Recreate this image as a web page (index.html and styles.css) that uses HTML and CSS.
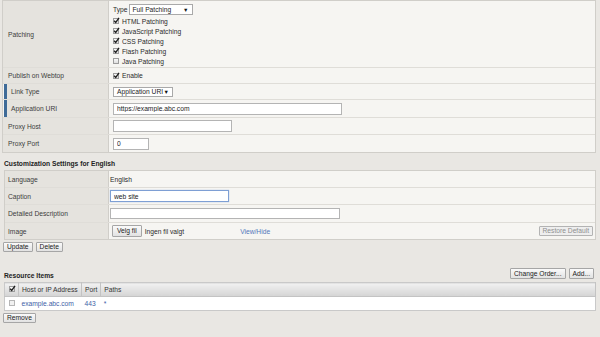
FILE: index.html
```html
<!DOCTYPE html>
<html lang="en">
<head>
    <meta charset="UTF-8">
    <meta name="viewport" content="width=device-width, initial-scale=1.0">
    <title>Webtop Link Properties</title>
    <link rel="stylesheet" href="styles.css">
</head>
<body>
    <div class="panel main">
        <div class="row patching">
            <div class="label">Patching</div>
            <div class="value stack">
                <div class="type-line">
                    <span>Type</span>
                    <span class="select wide"><span>Full Patching</span><span class="arrow">&#9660;</span></span>
                </div>
                <label class="check"><span class="cb on"><svg viewBox="0 0 8 8"><path d="M1.3 4.3 L3.1 6.2 L6.9 1"/></svg></span>HTML Patching</label>
                <label class="check"><span class="cb on"><svg viewBox="0 0 8 8"><path d="M1.3 4.3 L3.1 6.2 L6.9 1"/></svg></span>JavaScript Patching</label>
                <label class="check"><span class="cb on"><svg viewBox="0 0 8 8"><path d="M1.3 4.3 L3.1 6.2 L6.9 1"/></svg></span>CSS Patching</label>
                <label class="check"><span class="cb on"><svg viewBox="0 0 8 8"><path d="M1.3 4.3 L3.1 6.2 L6.9 1"/></svg></span>Flash Patching</label>
                <label class="check"><span class="cb"></span>Java Patching</label>
            </div>
        </div>
        <div class="row h16">
            <div class="label">Publish on Webtop</div>
            <div class="value">
                <label class="check"><span class="cb on"><svg viewBox="0 0 8 8"><path d="M1.3 4.3 L3.1 6.2 L6.9 1"/></svg></span>Enable</label>
            </div>
        </div>
        <div class="row h16">
            <div class="label sub">Link Type</div>
            <div class="value">
                <span class="select"><span>Application URI</span><span class="arrow">&#9660;</span></span>
            </div>
        </div>
        <div class="row h18">
            <div class="label sub">Application URI</div>
            <div class="value"><input class="field uri" type="text" value="https://example.abc.com"></div>
        </div>
        <div class="row h17">
            <div class="label">Proxy Host</div>
            <div class="value"><input class="field host" type="text" value=""></div>
        </div>
        <div class="row h17">
            <div class="label">Proxy Port</div>
            <div class="value"><input class="field port" type="text" value="0"></div>
        </div>
    </div>

    <h2 class="section-title">Customization Settings for English</h2>
    <div class="panel lang">
        <div class="row h17">
            <div class="label">Language</div>
            <div class="value">English</div>
        </div>
        <div class="row h17">
            <div class="label">Caption</div>
            <div class="value"><input class="field caption" type="text" value="web site"></div>
        </div>
        <div class="row h18">
            <div class="label">Detailed Description</div>
            <div class="value"><input class="field desc" type="text" value=""></div>
        </div>
        <div class="row h16">
            <div class="label">Image</div>
            <div class="value image">
                <button class="btn file">Velg fil</button>
                <span class="no-file">Ingen fil valgt</span>
                <a class="link view" href="#">View/Hide</a>
                <button class="btn restore" disabled>Restore Default</button>
            </div>
        </div>
    </div>
    <div class="actions">
        <button class="btn">Update</button>
        <button class="btn">Delete</button>
    </div>

    <div class="res-head">
        <h2 class="section-title">Resource Items</h2>
        <div class="res-buttons">
            <button class="btn">Change Order...</button>
            <button class="btn">Add...</button>
        </div>
    </div>
    <table class="resources">
        <thead>
            <tr>
                <th class="c-cb"><span class="cb on"><svg viewBox="0 0 8 8"><path d="M1.3 4.3 L3.1 6.2 L6.9 1"/></svg></span></th>
                <th class="c-host">Host or IP Address</th>
                <th class="c-port">Port</th>
                <th>Paths</th>
            </tr>
        </thead>
        <tbody>
            <tr>
                <td class="c-cb"><span class="cb"></span></td>
                <td><a class="link" href="#">example.abc.com</a></td>
                <td><a class="link" href="#">443</a></td>
                <td><a class="link" href="#">*</a></td>
            </tr>
        </tbody>
    </table>
    <div class="actions">
        <button class="btn">Remove</button>
    </div>
</body>
</html>
```

FILE: styles.css
```css
* {
    box-sizing: border-box;
}
body {
    margin: 0;
    width: 600px;
    height: 337px;
    overflow: hidden;
    background: #e9e7e3;
    font-family: "Liberation Sans", Arial, sans-serif;
    font-size: 6.7px;
    color: #3c3c3c;
}
.panel {
    margin: 0 4px 0 2px;
    border: 1px solid #d0cec9;
    background: #f6f5f2;
}
.panel.lang {
    margin-left: 4px;
}
.row {
    display: grid;
    grid-template-columns: 106px 1fr;
    border-bottom: 1px solid #dfddd8;
}
.panel.lang .row {
    grid-template-columns: 104px 1fr;
}
.row:last-child {
    border-bottom: none;
}
.h16 { height: 16px; }
.h17 { height: 17px; }
.h18 { height: 18px; }
.patching { height: 67px; }
.label {
    display: flex;
    align-items: center;
    padding-left: 5px;
    background: #e5e3de;
    border-right: 1px solid #d0cec9;
}
.panel.lang .label {
    padding-left: 3px;
}
.label.sub {
    border-left: 3px solid #3f6b98;
    margin-left: 1px;
    padding-left: 4px;
}
.value {
    display: flex;
    align-items: center;
    padding-left: 4px;
    color: #2a2a2a;
}
.panel.lang .value {
    padding-left: 1px;
}
.value.stack {
    flex-direction: column;
    align-items: flex-start;
    padding-top: 3px;
}
.type-line {
    display: flex;
    align-items: center;
    gap: 1px;
    margin-bottom: 1px;
}
.select {
    display: inline-flex;
    align-items: center;
    justify-content: space-between;
    width: 60px;
    height: 10px;
    padding: 0 3px 0 3px;
    background: #fff;
    border: 1px solid #a9a9a9;
    color: #222;
}
.select.wide {
    width: 64px;
    height: 11px;
}
.arrow {
    font-size: 5.5px;
    color: #111;
}
.check {
    display: flex;
    align-items: center;
    gap: 3px;
    height: 10px;
}
.cb {
    position: relative;
    display: inline-block;
    width: 6px;
    height: 6px;
    background: linear-gradient(#f8f8f8, #dedede);
    border: 1px solid #9c9c9c;
}
.cb svg {
    position: absolute;
    left: -1px;
    top: -2px;
    width: 7px;
    height: 7px;
    overflow: visible;
}
.cb path {
    fill: none;
    stroke: #1d1d1d;
    stroke-width: 1.5;
}
.field {
    height: 12px;
    padding: 0 3px;
    font-family: inherit;
    font-size: 6.7px;
    color: #222;
    background: #fff;
    border: 1px solid #b4b4b4;
    outline: none;
}
.uri { width: 229px; }
.host { width: 119px; }
.port { width: 36px; }
.caption {
    width: 119px;
    border-color: #7e9fd4;
    box-shadow: 0 0 1px #9db6e0;
}
.desc {
    width: 230px;
    height: 11px;
}
.section-title {
    margin: 0;
    padding: 6px 0 0 4px;
    height: 17px;
    line-height: 10px;
    font-size: 6.7px;
    font-weight: bold;
    color: #222;
}
.btn {
    height: 10px;
    padding: 0 3px;
    font-family: inherit;
    font-size: 6.7px;
    line-height: 8px;
    color: #222;
    background: linear-gradient(#fafafa, #e2e2e2);
    border: 1px solid #a6a6a6;
    border-radius: 1px;
}
.image {
    padding-right: 2px;
}
.btn.file {
    height: 12px;
    margin-left: 2px;
    padding: 0 4px;
}
.no-file {
    margin-left: 3px;
}
.link {
    color: #3e5ea6;
    text-decoration: none;
}
.view {
    margin-left: 56px;
    color: #5478bb;
}
.btn.restore {
    margin-left: auto;
    color: #8e8e8e;
    background: #eeeeee;
    border-color: #b3b3b3;
}
.actions {
    display: flex;
    gap: 3px;
    margin: 2px 0 0 3px;
}
.res-head {
    display: flex;
    align-items: flex-end;
    justify-content: space-between;
    height: 13px;
    margin: 15px 6px 0 0;
}
.res-head .section-title {
    padding-top: 0;
    height: 10px;
    margin-bottom: -1px;
}
.res-buttons {
    display: flex;
    gap: 3px;
    margin-bottom: 1px;
}
.res-buttons .btn {
    height: 11px;
}
.resources {
    width: 592px;
    margin: 2px 0 0 4px;
    border-collapse: collapse;
    border: 1px solid #c9c9c9;
}
.resources th {
    height: 14px;
    padding: 0 3px;
    text-align: left;
    font-weight: normal;
    color: #333;
    background: linear-gradient(#f1f1f1, #d4d4d4);
    border-right: 1px solid #c3c3c3;
    border-bottom: 1px solid #c3c3c3;
}
.resources td {
    height: 14px;
    padding: 0 3px;
    background: #fff;
}
.resources .c-cb {
    width: 14px;
    padding: 0 0 0 4px;
}
.resources td.c-cb .cb {
    border-color: #b6b6b6;
    background: #f1f1f1;
}
.c-host { width: 63px; }
.c-port { width: 18px; }
```
